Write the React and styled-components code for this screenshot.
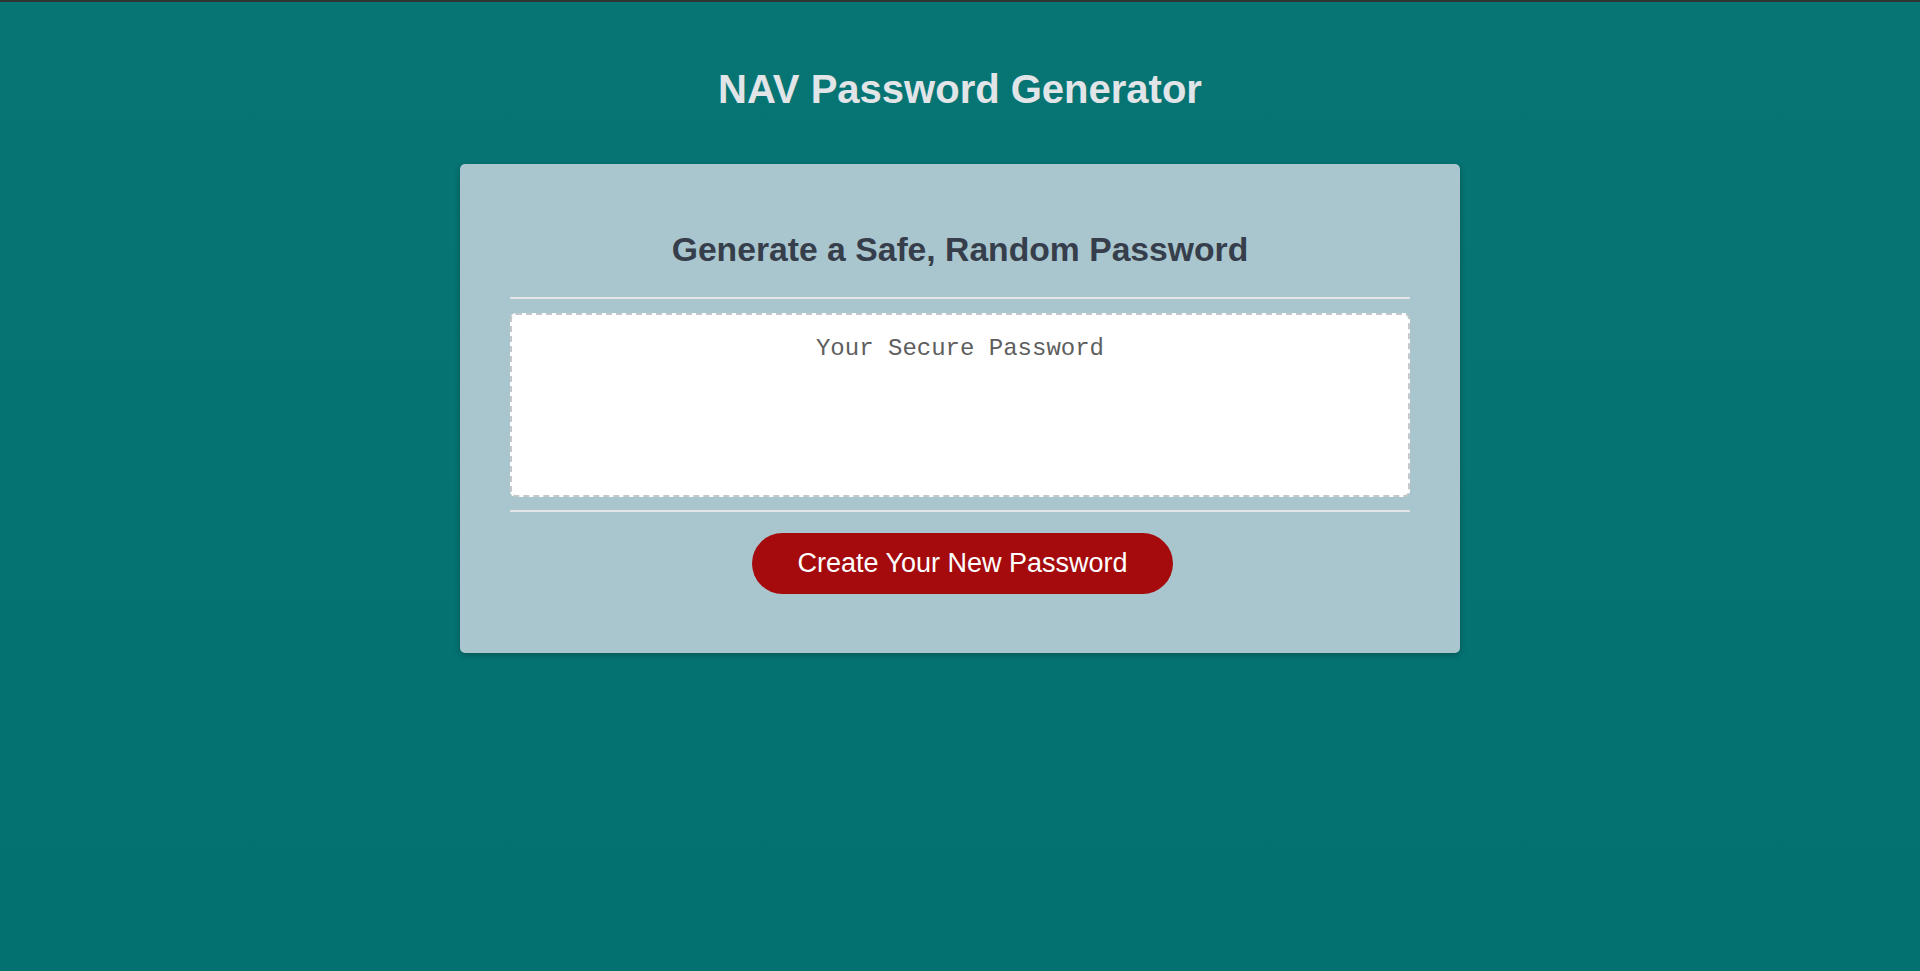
import styled, { createGlobalStyle } from 'styled-components';

// 페이지 전체 기본 스타일
const GlobalStyle = createGlobalStyle`
    html, body {
        margin: 0;
        padding: 0;
    }

    body {
        min-height: 100vh;
        background: linear-gradient(180deg, #077574 0%, #037170 100%);
        border-top: 2px solid #2e3535;
        box-sizing: border-box;
        font-family: 'Liberation Sans', Arial, Helvetica, sans-serif;
    }
`;

const App = () => {
    return (
        <>
            <GlobalStyle />
            <Wrapper>
                <Title>NAV Password Generator</Title>
                <Card>
                    <CardHeader>Generate a Safe, Random Password</CardHeader>
                    <Divider />
                    <PasswordBox
                        readOnly
                        placeholder="Your Secure Password"
                        aria-label="Generated Password"
                    />
                    <Divider mt="13px" />
                    <ButtonRow>
                        <GenerateBtn type="button">Create Your New Password</GenerateBtn>
                    </ButtonRow>
                </Card>
            </Wrapper>
        </>
    );
};

export default App;

const Wrapper = styled.main`
    display: flex;
    flex-direction: column;
    align-items: center;
    padding-bottom: 40px;
`;

const Title = styled.h1`
    margin: 64px 0 52px;
    font-size: 40px;
    line-height: 46px;
    font-weight: 700;
    color: #e2e5e8;
    text-align: center;
`;

const Card = styled.section`
    width: 1000px;
    box-sizing: border-box;
    padding: 0 50px 59px;
    background-color: #a9c5ce;
    border-radius: 5px;
    box-shadow: 0 2px 6px rgba(0, 0, 0, 0.25);
    display: flex;
    flex-direction: column;
`;

const CardHeader = styled.h2`
    margin: 66px 0 28px;
    font-size: 33.7px;
    line-height: 39px;
    font-weight: 700;
    color: #353e4a;
    text-align: center;
`;

const Divider = styled.hr`
    width: 100%;
    height: 2px;
    margin: ${(props) => props.mt || '0'} 0 0;
    border: none;
    border-top: 2px solid #e3e6e9;
    box-sizing: border-box;
`;

const PasswordBox = styled.textarea`
    display: block;
    width: 100%;
    height: 184px;
    margin-top: 14px;
    padding: 20px 16px;
    box-sizing: border-box;
    border: 2px dashed #c3c8cc;
    border-radius: 6px;
    background-color: #ffffff;
    resize: none;
    outline: none;
    font-family: 'Liberation Mono', 'Courier New', monospace;
    font-size: 24px;
    color: #555555;
    text-align: center;

    &::placeholder {
        color: #5e5e5e;
    }
`;

const ButtonRow = styled.div`
    display: flex;
    justify-content: center;
    margin-top: 21px;
`;

const GenerateBtn = styled.button`
    height: 61px;
    padding: 0 45px;
    border: none;
    border-radius: 31px;
    background-color: #a50b0d;
    color: #ffffff;
    font-family: 'Liberation Sans', Arial, Helvetica, sans-serif;
    font-size: 27px;
    cursor: pointer;
    margin-left: 5px;

    &:hover {
        background-color: #8f0909;
    }
`;
